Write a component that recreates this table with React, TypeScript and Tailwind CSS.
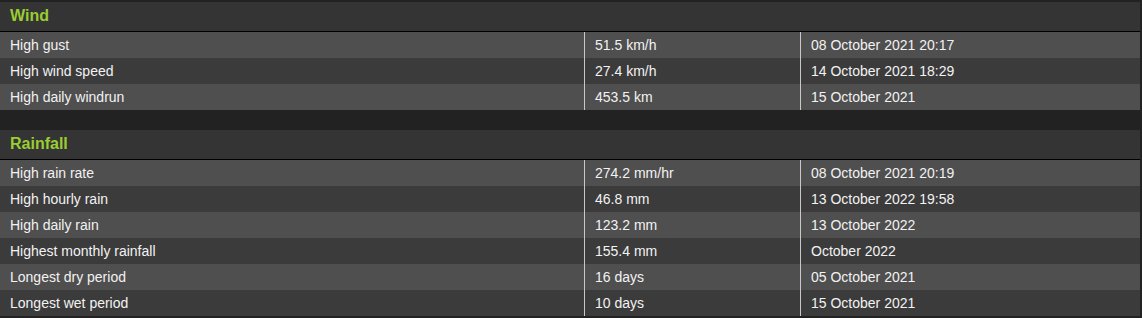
const sections = [
  {
    title: "Wind",
    rows: [
      ["High gust", "51.5 km/h", "08 October 2021 20:17"],
      ["High wind speed", "27.4 km/h", "14 October 2021 18:29"],
      ["High daily windrun", "453.5 km", "15 October 2021"],
    ],
  },
  {
    title: "Rainfall",
    rows: [
      ["High rain rate", "274.2 mm/hr", "08 October 2021 20:19"],
      ["High hourly rain", "46.8 mm", "13 October 2022 19:58"],
      ["High daily rain", "123.2 mm", "13 October 2022"],
      ["Highest monthly rainfall", "155.4 mm", "October 2022"],
      ["Longest dry period", "16 days", "05 October 2021"],
      ["Longest wet period", "10 days", "15 October 2021"],
    ],
  },
];

export default function App() {
  return (
    <div className="min-h-[318px] w-[1142px] bg-[#222222] pt-[2px] font-['Liberation_Sans',Arial,sans-serif]">
      <div className="flex w-[1140px] flex-col gap-5">
        {sections.map((s) => (
          <div key={s.title}>
            <div className="flex h-[30px] items-center border-b border-black bg-[#343434] px-[10px] pb-[1px] text-[16px] font-bold text-[#9acd32]">
              {s.title}
            </div>
            {s.rows.map((r, i) => (
              <div
                key={r[0]}
                className={`grid h-[26px] grid-cols-[584px_216px_1fr] text-[14px] text-[#f2f2f2] ${
                  i % 2 === 0 ? "bg-[#4f4f4f]" : "bg-[#3b3b3b]"
                }`}
              >
                <div className="flex items-center px-[10px]">{r[0]}</div>
                <div className="flex items-center border-l border-[#c8c8c8] px-[10px]">{r[1]}</div>
                <div className="flex items-center border-l border-[#c8c8c8] px-[10px]">{r[2]}</div>
              </div>
            ))}
          </div>
        ))}
      </div>
    </div>
  );
}
